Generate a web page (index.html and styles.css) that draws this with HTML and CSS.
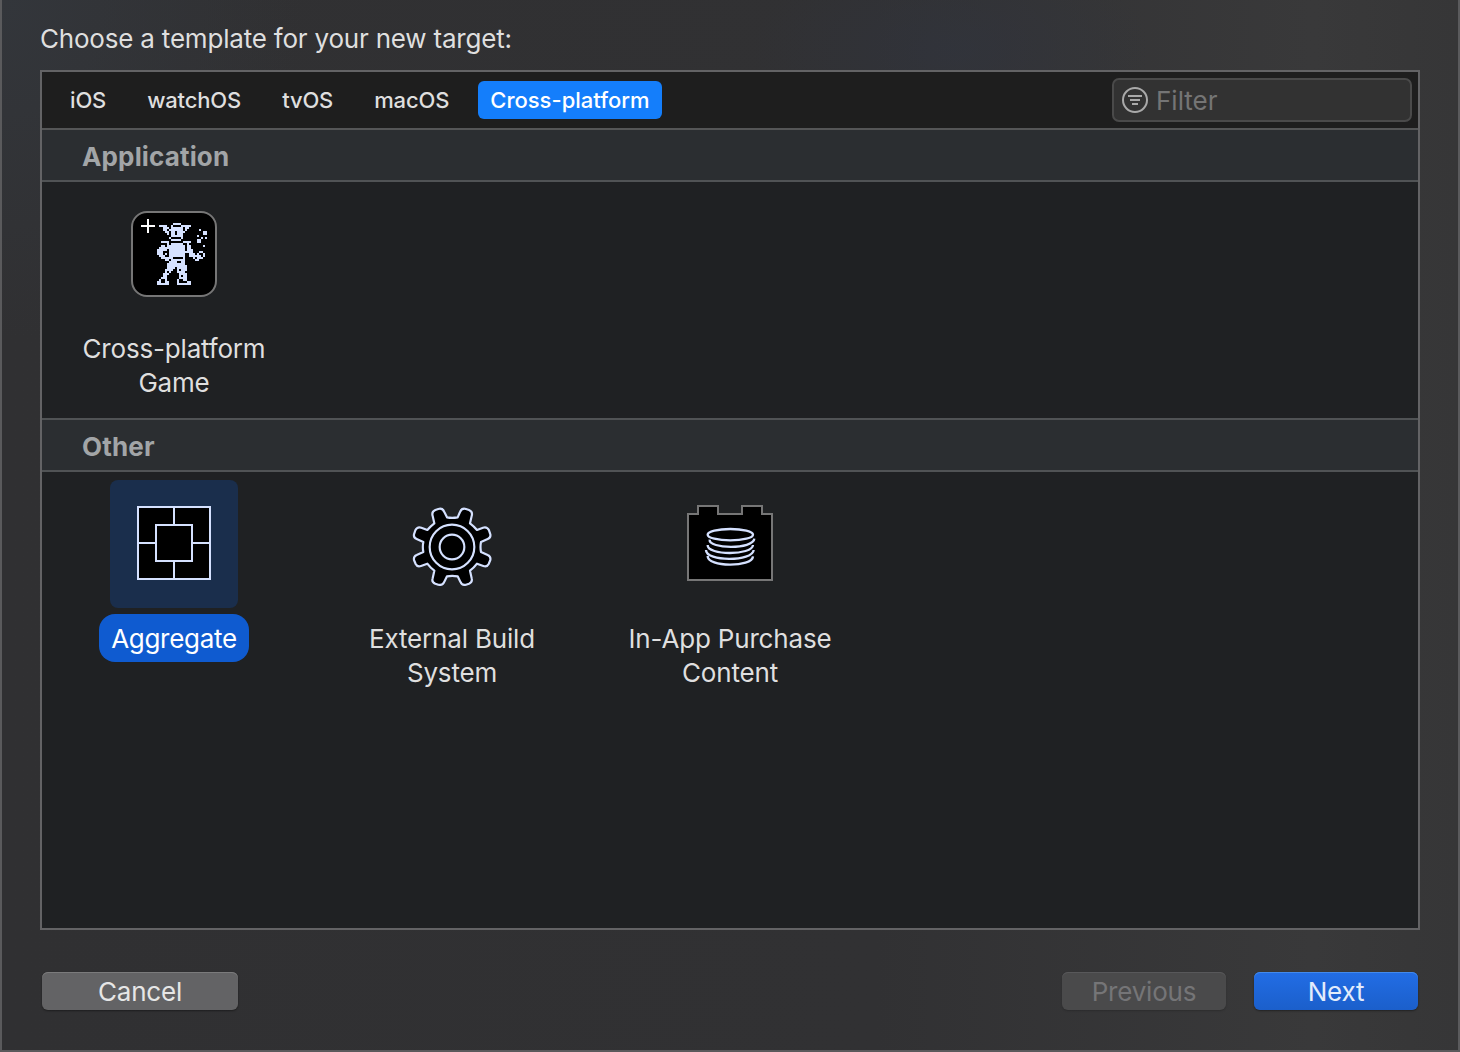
FILE: index.html
```html
<!DOCTYPE html>
<html lang="en">
<head>
<meta charset="utf-8">
<title>New Target</title>
<link rel="stylesheet" href="styles.css">
</head>
<body>
<main class="sheet">
  <h1 class="prompt">Choose a template for your new target:</h1>
  <section class="panel">
    <header class="toolbar">
      <nav class="tabs">
        <a class="tab">iOS</a>
        <a class="tab">watchOS</a>
        <a class="tab">tvOS</a>
        <a class="tab">macOS</a>
        <a class="tab selected">Cross-platform</a>
      </nav>
      <div class="filter">
        <svg width="26" height="26" viewBox="0 0 26 26" fill="none" stroke="#a9a9a9" stroke-width="2">
          <circle cx="13" cy="13" r="12"/>
          <path d="M6 9h14M8 13h10M10 17h6"/>
        </svg>
        <span class="filter-text">Filter</span>
      </div>
    </header>
    <h2 class="group-title">Application</h2>
    <div class="templates application">
      <div class="template">
        <div class="tile">
          <svg class="game" width="100" height="100" viewBox="0 0 300 300">
            <rect x="21" y="21" width="252" height="252" rx="45" fill="#000" stroke="#767676" stroke-width="6"/>
            <path fill="#fff" d="M66 42h6v18h18v6H72v18h-6V66H48v-6h18z"/>
            <!-- one unit per sprite pixel, one segment per run -->
            <g transform="translate(90 48) scale(6)" fill="none" stroke="#d5e1ff" shape-rendering="crispEdges">
              <path d="M9 1.5h4M2 2.5h4M8 2.5h1M13 2.5h5M4 3.5h3M8 3.5h6M15 3.5h2M4 4.5h2M7 4.5h7M15 4.5h1M5 5.5h2M8 5.5h2M11 5.5h4M6 6.5h1M8 6.5h2M11 6.5h3M8 7.5h6M7 8.5h1M13 8.5h1M8 9.5h5"/>
              <path d="M3 10.5h4M14 10.5h4M6 11.5h1M8 11.5h6M16 11.5h1M3 12.5h2M6 12.5h9M16 12.5h2M2 13.5h13M16 13.5h2M1 14.5h5M7 14.5h8M16 14.5h3M1 15.5h3M7 15.5h12M22 15.5h2M1 16.5h3M5 16.5h1M7 16.5h8M17 16.5h3M21 16.5h1M24 16.5h1M2 17.5h3M7 17.5h8M17 17.5h6M24 17.5h1M3 18.5h4M7 18.5h2M14 18.5h1M19 18.5h1M21 18.5h3M5 19.5h2M8 19.5h7M20 19.5h2"/>
              <path d="M7 20.5h4M13 20.5h2M6 21.5h9M6 22.5h10M6 23.5h4M11 23.5h5M5 24.5h4M11 24.5h1M13 24.5h3M5 25.5h1M7 25.5h1M11 25.5h4M4 26.5h3M12 26.5h4M4 27.5h2M12 27.5h1M14 27.5h2M3 28.5h3M12 28.5h4M2 29.5h1M5 29.5h1M11 29.5h1M14 29.5h2M1 30.5h2M5 30.5h2M11 30.5h1M16 30.5h2M1 31.5h6M11 31.5h7"/>
              <path d="M22 4.5h1M24 5.5h2M24 6.5h2M21 7.5h1M23 8.5h1M25 8.5h1M21 9.5h2M21 10.5h2M24 12.5h1"/>
            </g>
          </svg>
        </div>
        <span class="name">Cross-platform<br>Game</span>
      </div>
    </div>
    <h2 class="group-title">Other</h2>
    <div class="templates other">
      <div class="template active">
        <div class="tile">
          <svg class="aggregate" width="74" height="74" viewBox="0 0 74 74" fill="#000" stroke="#d5e1ff" stroke-width="2">
            <path d="M1 1h72v72H1zM37 1v72M1 37h72"/>
            <path d="M19 19h36v36H19z"/>
          </svg>
        </div>
        <span class="name">Aggregate</span>
      </div>
      <div class="template">
        <div class="tile">
          <svg class="gear" width="105" height="105" viewBox="0 0 315 315" fill="#000" stroke="#d5e1ff" stroke-width="6.5" stroke-linejoin="round">
            <path d="M141 67Q156 70 173 67L180 51Q185 38 198 42L207 45Q219 50 215 63L210 85Q223 95 231 105L249 98Q261 94 267 106L271 118Q273 128 263 132L243 141Q240 156 243 171L263 180Q273 184 271 195L266 207Q261 217 250 213L231 206Q222 218 210 227L215 250Q218 261 207 266L198 269Q186 273 181 260L173 244Q156 241 141 244L133 260Q128 273 115 269L106 266Q94 261 98 250L103 227Q91 218 82 206L63 213Q52 217 47 207L42 195Q40 184 50 180L70 171Q67 156 70 141L50 132Q40 128 42 118L46 106Q52 94 64 98L82 105Q90 95 103 85L98 63Q94 50 106 45L115 42Q128 38 133 51Z"/>
            <circle cx="156" cy="156" r="67"/>
            <circle cx="156" cy="156" r="37"/>
          </svg>
        </div>
        <span class="name">External Build<br>System</span>
      </div>
      <div class="template">
        <div class="tile">
          <svg class="brick" width="110" height="100" viewBox="0 0 330 300" fill="none">
            <path d="M39 57h30V33h60v24h72V33h60v24h30v198H39z" fill="#000" stroke="#767676" stroke-width="6"/>
            <g stroke="#d5e1ff" stroke-width="7">
              <ellipse cx="166" cy="119" rx="68" ry="17"/>
              <path d="M104 134C100 162 235 164 238 131M98 150C96 182 232 182 234 150M93 165C92 201 234 200 236 165M98 183C96 217 232 218 234 184"/>
            </g>
          </svg>
        </div>
        <span class="name">In-App Purchase<br>Content</span>
      </div>
    </div>
  </section>
  <footer class="actions">
    <button class="btn cancel">Cancel</button>
    <button class="btn previous" disabled>Previous</button>
    <button class="btn next">Next</button>
  </footer>
</main>
</body>
</html>
```
FILE: styles.css
```css
* { box-sizing: border-box; }
body { margin: 0; font-family: Inter, "Liberation Sans", sans-serif; color: #dfdfdf; }
h1, h2 { margin: 0; }
svg { flex: none; }
.sheet {
  width: 1460px;
  height: 1052px;
  padding: 18px 38px 0;
  border: solid #5a5a5c;
  border-width: 0 2px 2px;
  background:
    radial-gradient(ellipse 200px 100px at 950px 50px, #30343f99 0%, transparent 100%),
    radial-gradient(ellipse 300px 340px at 0 0, #33363b 0%, transparent 100%),
    linear-gradient(90deg, #303032 0%, #313133 60%, #39393a 90%, #363637 100%);
}
.prompt { height: 52px; font-size: 26px; line-height: 42px; font-weight: 420; letter-spacing: -0.2px; white-space: nowrap; }
.panel { display: flex; flex-direction: column; height: 860px; border: 2px solid #636365; background: #1f2123; }
.toolbar { display: flex; justify-content: space-between; align-items: center; height: 58px; padding: 0 6px 0 16px; border-bottom: 2px solid #555657; background: #1e1e1e; }
.tabs { display: flex; gap: 17px; }
.tab { height: 38px; padding: 0 12px; border-radius: 6px; font-size: 22px; line-height: 38px; font-weight: 450; letter-spacing: -0.15px; white-space: nowrap; }
.tab.selected { background: #147efb; color: #fff; width: 184px; letter-spacing: 0; }
.filter { display: flex; align-items: center; gap: 8px; width: 300px; height: 44px; padding-left: 8px; border: 2px solid #4a4a4a; border-radius: 7px; background: #323232; }
.filter-text { font-size: 26px; color: #757575; }
.group-title { height: 52px; padding-left: 40px; border-bottom: 2px solid #505355; background: #2b2e31; font-size: 26px; line-height: 54px; font-weight: 700; color: #a2a5a7; letter-spacing: 0.15px; }
.templates { display: flex; padding-left: 32px; gap: 78px; }
.application { height: 238px; padding-top: 8px; border-bottom: 2px solid #505355; }
.other { padding-top: 8px; }
.template { display: flex; flex-direction: column; align-items: center; width: 200px; }
.tile { display: flex; align-items: center; justify-content: center; width: 128px; height: 128px; border-radius: 8px; }
.active .tile { background: #1a2e4c; }
.game { margin: 2px 0 0 2px; }
.aggregate { margin-bottom: 2px; }
.gear { margin-top: 7px; }
.brick { margin-top: 2px; }
.name { margin-top: 14px; font-size: 26px; line-height: 34px; letter-spacing: -0.18px; text-align: center; white-space: nowrap; }
.active .name { width: 150px; height: 48px; margin-top: 6px; border-radius: 16px; background: #0f5bd0; line-height: 50px; letter-spacing: -0.3px; color: #fff; }
.actions { display: flex; padding: 42px 2px 0; }
.btn { height: 38px; border: 0; border-radius: 6px; padding: 0; font: 400 26px/40px Inter, "Liberation Sans", sans-serif; letter-spacing: -0.2px; box-shadow: inset 0 1px #7b7b7c, 0 1px 2px #0006; }
.cancel { width: 196px; background: #636365; color: #e6e6e6; }
.previous { width: 164px; margin-left: auto; background: #4a4a4b; color: #757577; box-shadow: inset 0 1px #58585a, 0 1px 2px #0003; }
.next { width: 164px; margin-left: 28px; background: linear-gradient(#226de5, #1b5fcb); color: #e3ecfb; box-shadow: inset 0 1px #438aec, 0 1px 2px #0006; }
```
